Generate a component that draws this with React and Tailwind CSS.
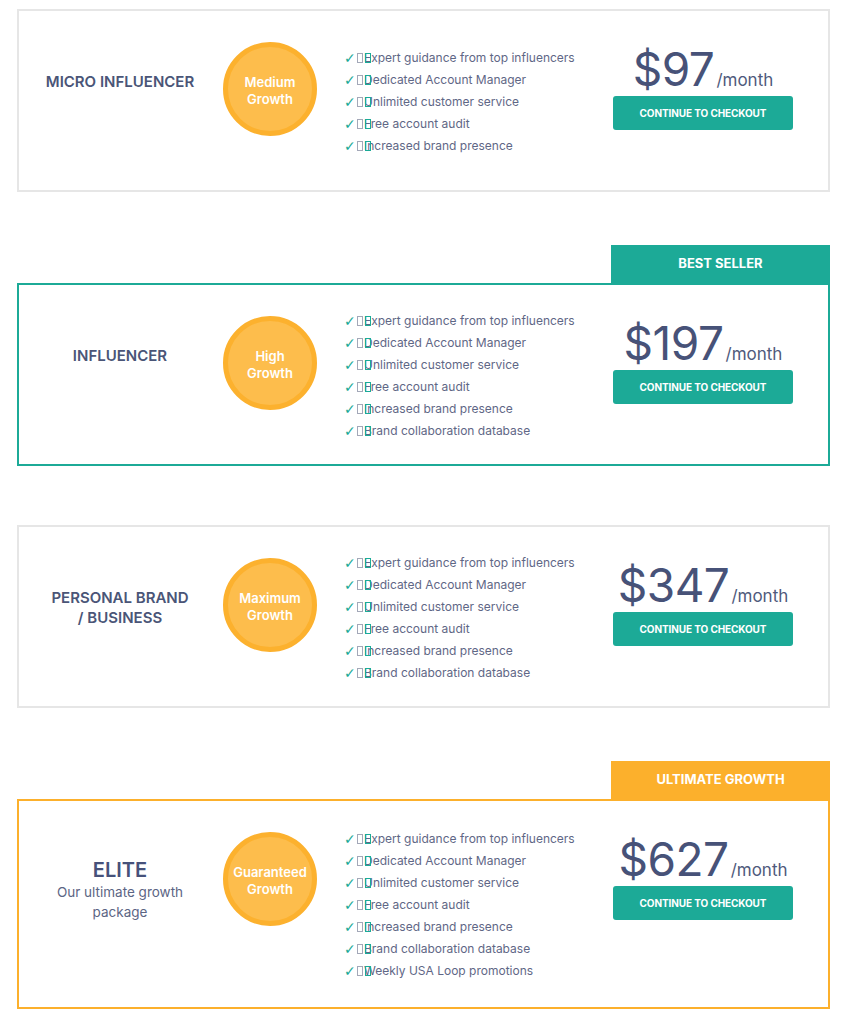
import React from "react";

const FEATURES = [
  "Expert guidance from top influencers",
  "Dedicated Account Manager",
  "Unlimited customer service",
  "Free account audit",
  "Increased brand presence",
  "Brand collaboration database",
  "Weekly USA Loop promotions",
];

const PLANS = [
  {
    title: ["MICRO INFLUENCER"],
    growth: ["Medium", "Growth"],
    count: 5,
    price: "$97",
    border: "border-[#e6e6e6]",
    minH: "min-h-[183px]",
    wrap: "mt-[9px]",
  },
  {
    title: ["INFLUENCER"],
    growth: ["High", "Growth"],
    count: 6,
    price: "$197",
    border: "border-[#1caa97]",
    minH: "min-h-[183px]",
    wrap: "mt-[53px]",
    badge: { text: "BEST SELLER", bg: "bg-[#1caa97]" },
  },
  {
    title: ["PERSONAL BRAND", "/ BUSINESS"],
    growth: ["Maximum", "Growth"],
    count: 6,
    price: "$347",
    border: "border-[#e6e6e6]",
    minH: "min-h-[183px]",
    wrap: "mt-[59px]",
  },
  {
    elite: true,
    growth: ["Guaranteed", "Growth"],
    count: 7,
    price: "$627",
    border: "border-[#fcb02c]",
    minH: "min-h-[210px]",
    wrap: "mt-[53px]",
    badge: { text: "ULTIMATE GROWTH", bg: "bg-[#fcb02c]" },
  },
];

function Feature({ text }) {
  return (
    <li className="flex items-center h-[22px] text-[12px] text-[#5f6786]">
      <span
        className="text-[#1caa97] text-[14px] leading-none w-[11px] mr-[2px]"
        style={{ fontFamily: "'DejaVu Sans', sans-serif" }}
      >
        ✓
      </span>
      <span className="inline-block w-[6px] h-[10px] border border-[#a3a8b8] mr-[1px]" />
      <span className="relative whitespace-nowrap">
        <span className="absolute left-[1px] top-[4px] w-[6px] h-[10px] border border-[#1caa97]" />
        {text}
      </span>
    </li>
  );
}

function Plan({ plan }) {
  return (
    <div className={plan.wrap}>
      {plan.badge && (
        <div className="flex justify-end">
          <div
            className={`${plan.badge.bg} w-[219px] h-[38px] flex items-center justify-center text-white font-bold text-[13px]`}
          >
            {plan.badge.text}
          </div>
        </div>
      )}
      <div className={`border-2 ${plan.border} ${plan.minH} flex items-start bg-white`}>
        <div className="w-[202px] text-center">
          {plan.elite ? (
            <div className="mt-[57px]">
              <div className="text-[20px] leading-[24px] font-semibold text-[#46517a]">ELITE</div>
              <div className="text-[13.5px] leading-[20px] text-[#5c6584]">
                Our ultimate growth
                <br />
                package
              </div>
            </div>
          ) : (
            <div className="mt-[61px] text-[15px] leading-[20px] font-semibold text-[#4a5577]">
              {plan.title.map((t) => (
                <div key={t}>{t}</div>
              ))}
            </div>
          )}
        </div>
        <div className="ml-[2px] mt-[31px] w-[94px] h-[94px] rounded-full bg-[#fdbd4c] border-[5px] border-[#fcb12e] flex flex-col items-center justify-center pt-[3px] text-white font-semibold text-[13px] leading-[17px] shrink-0">
          {plan.growth.map((g) => (
            <span key={g}>{g}</span>
          ))}
        </div>
        <ul className="ml-[27px] w-[269px] self-center pt-[24px] pb-[22px]">
          {FEATURES.slice(0, plan.count).map((f) => (
            <Feature key={f} text={f} />
          ))}
        </ul>
        <div className="w-[180px] mt-[31px] flex flex-col items-center">
          <div className="flex items-baseline text-[#475278] h-[54px]">
            <span className="text-[46px] leading-[54px] font-normal tracking-[-0.5px]">{plan.price}</span>
            <span className="text-[17px] ml-[2px] text-[#4f5a7c]">/month</span>
          </div>
          <button className="w-[180px] h-[34px] rounded-[3px] bg-[#1caa97] text-white text-[10px] tracking-[-0.1px] font-bold">
            CONTINUE TO CHECKOUT
          </button>
        </div>
      </div>
    </div>
  );
}

export default function App() {
  return (
    <div
      className="w-[844px] min-h-[1024px] bg-white pl-[17px] pr-[14px] pb-[15px]"
      style={{ fontFamily: "Inter, 'Noto Sans', 'Liberation Sans', sans-serif" }}
    >
      {PLANS.map((p, i) => (
        <Plan key={i} plan={p} />
      ))}
    </div>
  );
}
